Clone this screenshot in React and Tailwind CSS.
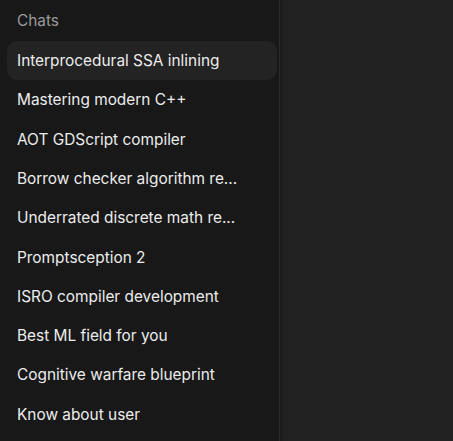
const chats = [
  'Interprocedural SSA inlining',
  'Mastering modern C++',
  'AOT GDScript compiler',
  'Borrow checker algorithm re...',
  'Underrated discrete math re...',
  'Promptsception 2',
  'ISRO compiler development',
  'Best ML field for you',
  'Cognitive warfare blueprint',
  'Know about user',
];

export default function App() {
  return (
    <div className="flex h-[441px] w-[453px] overflow-hidden bg-[#212121] font-['Inter',sans-serif]">
      <aside className="flex w-[279px] shrink-0 flex-col bg-[#181818] pl-[7px] pr-[2px]">
        <div className="flex h-[41px] shrink-0 items-center px-[10px] text-[15.4px] text-[#9b9b9b]">Chats</div>
        <nav className="flex flex-col">
          {chats.map((c, i) => (
            <div
              key={c}
              className={`flex h-[39.3px] shrink-0 items-center rounded-[10px] px-[10px] text-[15.4px] text-[#ececec] ${
                i === 0 ? 'bg-[#232323]' : ''
              }`}>
              <span className="truncate">{c}</span>
            </div>
          ))}
        </nav>
      </aside>
      <div className="w-[1px] shrink-0 bg-[#2a2a2a]" />
      <div className="w-[3px] shrink-0 bg-[#1c1c1c]" />
      <main className="flex-1 bg-[#212121]" />
    </div>
  );
}
